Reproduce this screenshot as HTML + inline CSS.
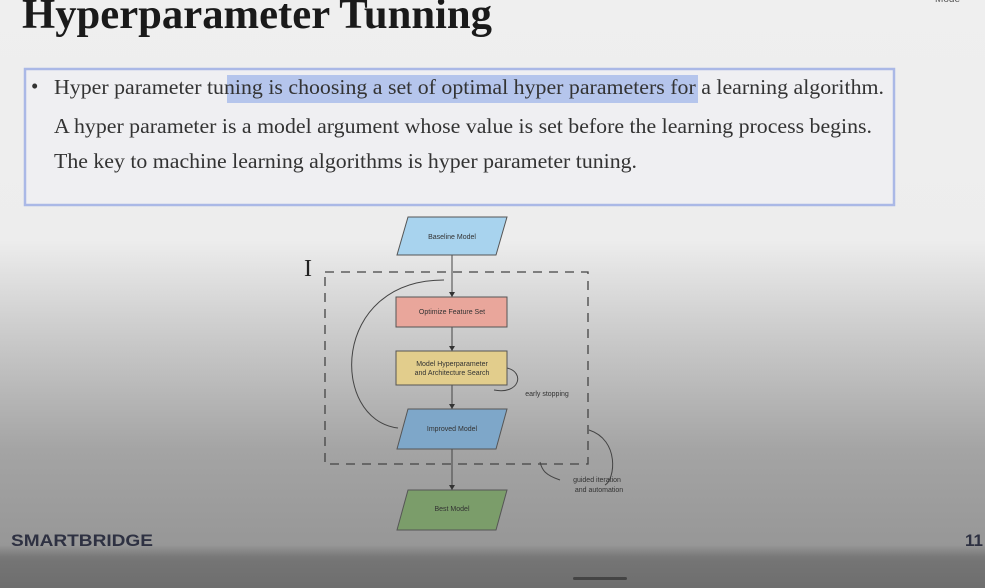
<!DOCTYPE html>
<html><head><style>
html,body{margin:0;padding:0;}
body{width:985px;height:588px;overflow:hidden;background:linear-gradient(#efefef 0px,#ededed 240px,#c9c9c9 340px,#a4a4a4 450px,#979797 545px,#7a7a7a 556px,#747474 562px,#6e6e6e 588px);}
</style></head><body>
<svg width="985" height="588" xmlns="http://www.w3.org/2000/svg" style="position:absolute;left:0;top:0">
<text x="22" y="28" font-family="Liberation Serif, serif" font-weight="bold" font-size="42" fill="#1a1a1a" textLength="470" lengthAdjust="spacingAndGlyphs">Hyperparameter Tunning</text>
<rect x="25" y="69" width="869" height="136" fill="#efeff2" stroke="#aab8e6" stroke-width="2.5"/>
<rect x="227" y="75" width="471" height="28" fill="#b5c5ec"/>
<g font-family="Liberation Serif, serif" font-size="21" fill="#333">
<text x="31" y="93">•</text>
<text x="54" y="94" textLength="830" lengthAdjust="spacingAndGlyphs">Hyper parameter tuning is choosing a set of optimal hyper parameters for a learning algorithm.</text>
<text x="54" y="133" textLength="818" lengthAdjust="spacingAndGlyphs">A hyper parameter is a model argument whose value is set before the learning process begins.</text>
<text x="54" y="168" textLength="583" lengthAdjust="spacingAndGlyphs">The key to machine learning algorithms is hyper parameter tuning.</text>
</g>
<text x="935" y="2" font-family="Liberation Sans" font-size="10" fill="#555">Mode</text>
<g stroke="#444" stroke-width="1" fill="none">
<rect x="325" y="272" width="263" height="192" stroke-dasharray="9,7" stroke-width="1.3"/>
<line x1="452" y1="255" x2="452" y2="297"/>
<line x1="452" y1="327" x2="452" y2="351"/>
<line x1="452" y1="385" x2="452" y2="409"/>
<line x1="452" y1="449" x2="452" y2="490"/>
<path d="M398 428 C 330 420, 330 280, 444 280"/>
<path d="M507 368 C 525 372, 520 395, 494 390"/>
<path d="M589 430 C 620 440, 615 480, 605 485"/>
<path d="M560 480 C 545 475, 542 470, 540 462"/>
</g>
<polygon points="408,217 507,217 496,255 397,255" fill="#a8d3ee" stroke="#555"/>
<rect x="396" y="297" width="111" height="30" fill="#e9a69b" stroke="#555"/>
<rect x="396" y="351" width="111" height="34" fill="#e2cd8c" stroke="#555"/>
<polygon points="408,409 507,409 496,449 397,449" fill="#7ea7c9" stroke="#555"/>
<polygon points="408,490 507,490 496,530 397,530" fill="#7b9d6a" stroke="#555"/>
<g font-family="Liberation Sans, sans-serif" font-size="7" fill="#333" text-anchor="middle">
<text x="452" y="239">Baseline Model</text>
<text x="452" y="314">Optimize Feature Set</text>
<text x="452" y="366">Model Hyperparameter</text>
<text x="452" y="375">and Architecture Search</text>
<text x="452" y="431">Improved Model</text>
<text x="452" y="511">Best Model</text>
<text x="547" y="396">early stopping</text>
<text x="597" y="482">guided iteration</text>
<text x="599" y="492">and automation</text>
</g>
<g fill="#333">
<polygon points="449,292 455,292 452,297"/>
<polygon points="449,346 455,346 452,351"/>
<polygon points="449,404 455,404 452,409"/>
<polygon points="449,485 455,485 452,490"/>
</g>
<text x="304" y="276" font-family="Liberation Serif, serif" font-size="24" fill="#222">I</text>
<text x="11" y="546" font-family="Liberation Sans, sans-serif" font-weight="bold" font-size="17" fill="#2e3142" textLength="142" lengthAdjust="spacingAndGlyphs">SMARTBRIDGE</text>
<text x="965" y="546" font-family="Liberation Sans, sans-serif" font-weight="bold" font-size="17" fill="#2e3142">11</text>
<rect x="573" y="577" width="54" height="3" rx="1.5" fill="#444"/>
</svg>
</body></html>
